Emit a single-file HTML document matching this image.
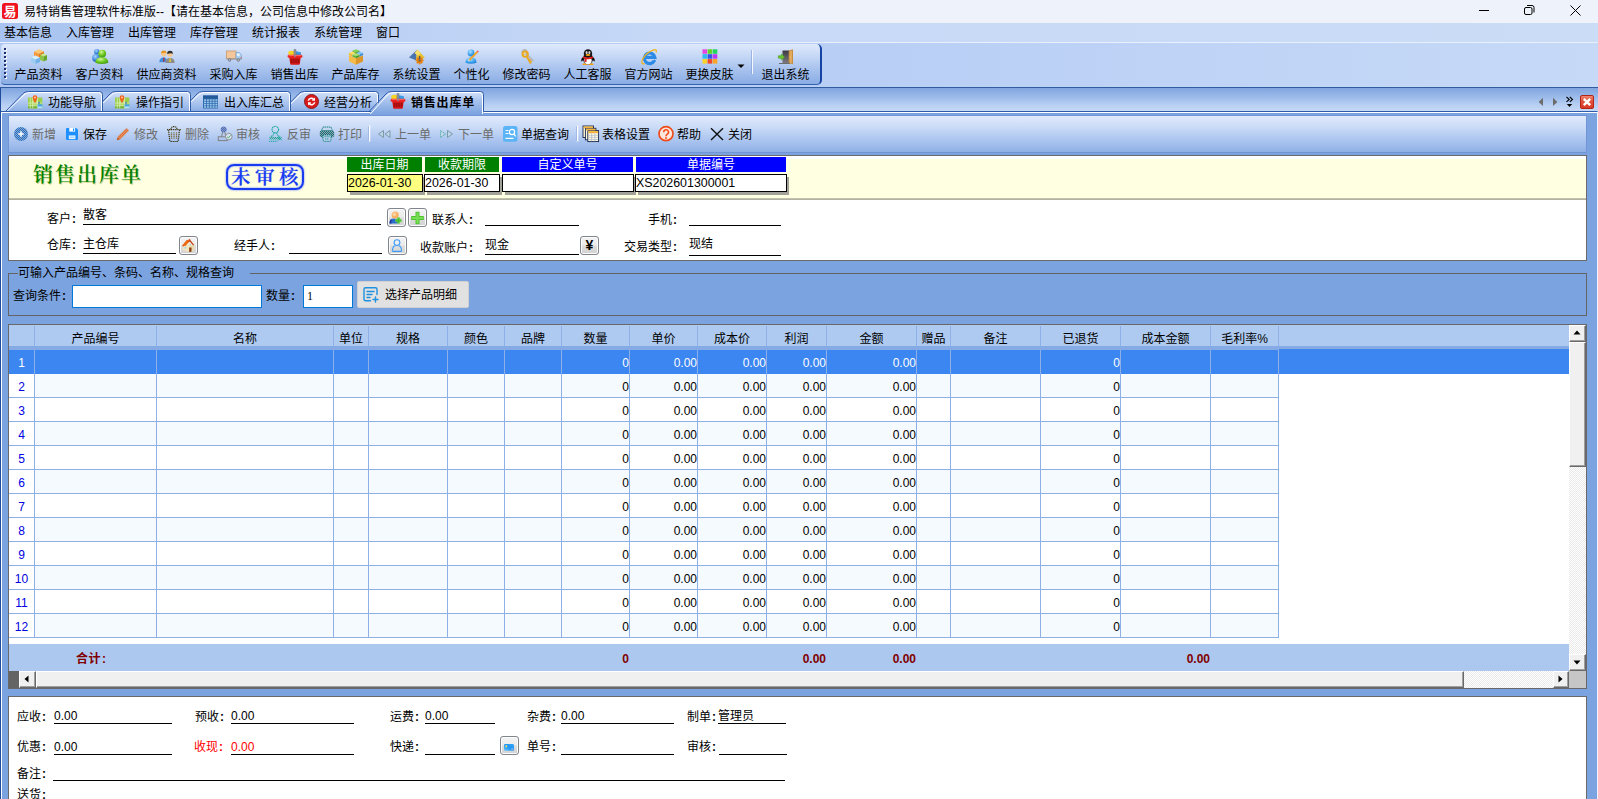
<!DOCTYPE html>
<html lang="zh-CN"><head><meta charset="utf-8"><title>易特销售管理软件标准版</title>
<style>
html,body{margin:0;padding:0}
body{width:1598px;height:799px;overflow:hidden;position:relative;background:#7ba3df;color:#000;
 font-family:"Liberation Sans","Noto Sans CJK SC",sans-serif;font-size:12px;line-height:14px}
div,span,svg{position:absolute;box-sizing:border-box}
svg{overflow:visible}
.t{white-space:nowrap;height:14px;line-height:14px}
.g{color:#6d6d6d}
.ul{height:1px;background:#000}
b{font-weight:bold;margin-left:1px;margin-right:1px}
.btn{background:#e6e6e6;border:1px solid #adadad;border-radius:2px}
</style></head>
<body>
<div style="left:0px;top:0px;width:1598px;height:23px;background:#eef2fa"></div>
<svg style="left:2px;top:3px" width="16" height="16" viewBox="0 0 16 16"><rect x="0" y="0" width="16" height="16" rx="2.5" fill="#f0141e"/><text x="8" y="13" font-size="13" font-weight="bold" text-anchor="middle" fill="#fff" font-family='"Liberation Sans","Noto Sans CJK SC",sans-serif'>易</text></svg>
<span class="t" style="left:24px;top:5px;">易特销售管理软件标准版--【请在基本信息，公司信息中修改公司名】</span>
<svg style="left:1470px;top:0" width="128" height="23" viewBox="0 0 128 23"><g stroke="#000" stroke-width="1" fill="none"><path d="M9 10.500h10"/><rect x="54.500" y="7.500" width="7.500" height="7" rx="1.500"/><path d="M57 5.500h5a2 2 0 0 1 2 2v5"/><path d="M100.500 5.500l10 10M110.500 5.500l-10 10"/></g></svg>
<div style="left:0px;top:23px;width:1598px;height:19px;background:linear-gradient(90deg,#a8c3f1 0,#b9cff4 300px,#c7d9f6 700px,#cbdcf7 100%)"></div>
<span class="t" style="left:4px;top:26px;">基本信息</span>
<span class="t" style="left:66px;top:26px;">入库管理</span>
<span class="t" style="left:128px;top:26px;">出库管理</span>
<span class="t" style="left:190px;top:26px;">库存管理</span>
<span class="t" style="left:252px;top:26px;">统计报表</span>
<span class="t" style="left:314px;top:26px;">系统管理</span>
<span class="t" style="left:376px;top:26px;">窗口</span>
<div style="left:0px;top:42px;width:1598px;height:1px;background:#e9f0fc"></div>
<div style="left:0px;top:43px;width:1598px;height:44px;background:linear-gradient(90deg,#adc6f2 0,#b5ccf4 400px,#b9cff5 900px,#c6d9f7 100%)"></div>
<div style="left:1px;top:44px;width:821px;height:41px;background:linear-gradient(180deg,#dfe9fb 0,#c6d8f6 30%,#a9c3ee 62%,#8aace4 100%);border-radius:4px 5px 5px 4px;border-right:2px solid #1443a4;border-bottom:1px solid #3562ae"></div>
<div style="left:5px;top:49px;width:2px;height:2px;background:#fff"></div>
<div style="left:4px;top:48px;width:2px;height:2px;background:#1c2f6e"></div>
<div style="left:5px;top:53px;width:2px;height:2px;background:#fff"></div>
<div style="left:4px;top:52px;width:2px;height:2px;background:#1c2f6e"></div>
<div style="left:5px;top:57px;width:2px;height:2px;background:#fff"></div>
<div style="left:4px;top:56px;width:2px;height:2px;background:#1c2f6e"></div>
<div style="left:5px;top:61px;width:2px;height:2px;background:#fff"></div>
<div style="left:4px;top:60px;width:2px;height:2px;background:#1c2f6e"></div>
<div style="left:5px;top:65px;width:2px;height:2px;background:#fff"></div>
<div style="left:4px;top:64px;width:2px;height:2px;background:#1c2f6e"></div>
<div style="left:5px;top:69px;width:2px;height:2px;background:#fff"></div>
<div style="left:4px;top:68px;width:2px;height:2px;background:#1c2f6e"></div>
<div style="left:5px;top:73px;width:2px;height:2px;background:#fff"></div>
<div style="left:4px;top:72px;width:2px;height:2px;background:#1c2f6e"></div>
<div style="left:5px;top:77px;width:2px;height:2px;background:#fff"></div>
<div style="left:4px;top:76px;width:2px;height:2px;background:#1c2f6e"></div>
<svg style="left:31px;top:49px" width="16" height="16" viewBox="0 0 16 16"><path d="M3 2.500l5-2.200 5 2.200-5 2.200z" fill="#ffc870"/><path d="M3 2.500l5 2.200v4.300l-5-2z" fill="#f4993c"/><path d="M13 2.500l-5 2.200v4.300l5-2z" fill="#e07c1c"/><path d="M0 8.500l4.500-2 4.500 2-4.500 2z" fill="#d6edfc"/><path d="M0 8.500l4.500 2v4.500l-4.500-2z" fill="#9ccdf2"/><path d="M9 8.500l-4.500 2v4.500l4.500-2z" fill="#72b2e8"/><path d="M9 6l3.500-1.500 3.500 1.500-3.500 1.500z" fill="#c6e88c"/><path d="M9 6l3.500 1.500v5l-3.500-1.500z" fill="#8cc646"/><path d="M16 6l-3.500 1.500v5l3.500-1.500z" fill="#68a628"/></svg>
<span class="t" style="left:8px;top:68px;width:61px;text-align:center">产品资料</span>
<svg style="left:92px;top:49px" width="16" height="16" viewBox="0 0 16 16"><defs><radialGradient id="cg" cx="0.4" cy="0.3" r="0.8"><stop offset="0" stop-color="#d4f79a"/><stop offset="0.5" stop-color="#6cc820"/><stop offset="1" stop-color="#3a900c"/></radialGradient><radialGradient id="cb" cx="0.4" cy="0.3" r="0.8"><stop offset="0" stop-color="#a8d4ff"/><stop offset="0.6" stop-color="#3a84dc"/><stop offset="1" stop-color="#1c50a8"/></radialGradient></defs><circle cx="4.800" cy="2.800" r="2.700" fill="url(#cb)"/><ellipse cx="4" cy="9" rx="3.800" ry="3.900" fill="url(#cb)"/><path d="M3.300 13.800Q3 8.200 9.800 8.200Q16.500 8.200 16.300 13.800Q9.800 16.400 3.300 13.800z" fill="url(#cg)"/><circle cx="10.200" cy="4.600" r="3.900" fill="url(#cg)"/></svg>
<span class="t" style="left:69px;top:68px;width:61px;text-align:center">客户资料</span>
<svg style="left:159px;top:49px" width="16" height="16" viewBox="0 0 16 16"><path d="M0.300 13.200Q0.300 8.400 4.800 8.400Q8.200 8.400 8.200 13.200z" fill="#3d8fe4"/><circle cx="4.800" cy="4.800" r="2.600" fill="#f9c88e"/><path d="M2.100 4.600Q2 1.500 4.800 1.500Q7.600 1.500 7.500 4.400Q6 2.900 2.100 4.600z" fill="#e8921e"/><path d="M4.400 8.500h.9l.3 3.500-.75.900-.75-.9z" fill="#c02828"/><path d="M6.300 14Q6.300 9 11 9Q15.700 9 15.700 14z" fill="#8c8c8c"/><circle cx="11" cy="5.200" r="2.700" fill="#f4c896"/><path d="M8.200 5Q8 1.800 11 1.800Q14 1.800 13.800 5Q12.500 3.300 8.200 5z" fill="#2c2c2c"/><path d="M10.600 9.100h.9l.3 3.200-.75.900-.75-.9z" fill="#f0d020"/></svg>
<span class="t" style="left:130px;top:68px;width:73px;text-align:center">供应商资料</span>
<svg style="left:226px;top:49px" width="16" height="16" viewBox="0 0 16 16"><rect x="0.500" y="2" width="9.500" height="7.500" fill="#f3c79a" stroke="#c79a6c" stroke-width="0.800"/><path d="M10 3.500h3.300l2.200 2.800v3.700h-5.500z" fill="#a9d0f2" stroke="#7aa4d0" stroke-width="0.700"/><rect x="11" y="4.500" width="2.600" height="2.300" fill="#eef7ff"/><rect x="0.500" y="9.500" width="15" height="1.200" fill="#9a9aa4"/><circle cx="3.600" cy="11" r="1.700" fill="#7c828a"/><circle cx="12.300" cy="11" r="1.700" fill="#7c828a"/><circle cx="3.600" cy="11" r="0.700" fill="#c8ccd0"/><circle cx="12.300" cy="11" r="0.700" fill="#c8ccd0"/><rect x="14.700" y="8" width="0.900" height="1.200" fill="#e84a30"/></svg>
<span class="t" style="left:203px;top:68px;width:61px;text-align:center">采购入库</span>
<svg style="left:287px;top:49px" width="16" height="16" viewBox="0 0 16 16"><ellipse cx="4.500" cy="4" rx="3.300" ry="2.300" fill="#f6d426"/><path d="M9 2.300l4.800 1 .2 2.700h-5z" fill="#3a9ae4"/><rect x="7" y="0.300" width="1.900" height="8.500" rx="0.900" fill="#9a9aa2" stroke="#5e5e68" stroke-width="0.500"/><path d="M2.200 8h11.600l-1 7a.9.900 0 0 1-.9.800h-7.800a.9.900 0 0 1-.9-.8z" fill="#d41616"/><rect x="0.600" y="5.700" width="14.800" height="3" rx="1.300" fill="#ee2424"/><rect x="1.500" y="6.200" width="13" height="0.900" rx="0.450" fill="#ff7a6a"/><path d="M4.300 10v4M6.200 10v4M8 10v4M9.800 10v4M11.700 10v4" stroke="#8a0c0c" stroke-width="0.900"/><rect x="7.300" y="4.500" width="1.300" height="3.800" fill="#8a8a94"/></svg>
<span class="t" style="left:264px;top:68px;width:61px;text-align:center">销售出库</span>
<svg style="left:348px;top:49px" width="16" height="16" viewBox="0 0 16 16"><path d="M1 6.300l7 3v6.500l-7-3.200z" fill="#f4bb48"/><path d="M15 6.300l-7 3v6.500l7-3.200z" fill="#dc962a"/><path d="M8 0.300l3.500 1.500-3.500 1.500-3.500-1.500z" fill="#86d44c"/><path d="M4.500 1.800l3.500 1.500v1.700l-3.500-1.500z" fill="#5aa82c"/><path d="M11.500 1.800l-3.500 1.500v1.700l3.500-1.500z" fill="#4a9420"/><path d="M4.400 2.600l3.500 1.500-3.500 1.500-3.500-1.500z" fill="#fbe060"/><path d="M0.900 4.100l3.500 1.500v1.800l-3.500-1.500z" fill="#f0b830"/><path d="M11.600 2.600l3.500 1.500-3.500 1.500-3.500-1.500z" fill="#7cc4f4"/><path d="M15.100 4.100l-3.500 1.500v1.800l3.500-1.500z" fill="#3c8cd8"/><path d="M8 4.300l3.500 1.500-3.500 1.500-3.500-1.500z" fill="#a4e070"/><path d="M4.500 5.800l3.500 1.500v2l-3.500-1.500z" fill="#66b634"/><path d="M11.500 5.800l-3.500 1.500v2l3.500-1.500z" fill="#4c9a24"/></svg>
<span class="t" style="left:325px;top:68px;width:61px;text-align:center">产品库存</span>
<svg style="left:409px;top:49px" width="16" height="16" viewBox="0 0 16 16"><path d="M8.300 0.600l-8.300 8 7 2.600z" fill="#4a72ac"/><path d="M8.300 0.600l-1.300 10.600 9-2.500z" fill="#e6c02e"/><path d="M8.300 0.600l3.500 3.800-3.300 2-3-2.300z" fill="#f8de6c"/><g fill="#e8820e"><circle cx="10.600" cy="11.400" r="3"/><rect x="9.800" y="7.400" width="1.600" height="8" /><rect x="6.600" y="10.600" width="8" height="1.600"/><rect x="9.800" y="7.400" width="1.600" height="8" transform="rotate(45 10.600 11.400)"/><rect x="6.600" y="10.600" width="8" height="1.600" transform="rotate(45 10.600 11.400)"/></g><circle cx="10.600" cy="11.400" r="1.200" fill="#7a6a58"/><rect x="9.900" y="7" width="1.400" height="3.200" fill="#5a5a66"/></svg>
<span class="t" style="left:386px;top:68px;width:61px;text-align:center">系统设置</span>
<svg style="left:464px;top:49px" width="16" height="16" viewBox="0 0 16 16"><defs><radialGradient id="pg" cx="0.4" cy="0.3" r="0.8"><stop offset="0" stop-color="#b4e2ff"/><stop offset="0.6" stop-color="#38a0f0"/><stop offset="1" stop-color="#1c78d0"/></radialGradient></defs><path d="M1.500 13.800Q1.400 8.400 7 8.400Q12.600 8.400 12.500 13.800Q7 15.800 1.500 13.800z" fill="url(#pg)"/><circle cx="7" cy="4" r="3.400" fill="url(#pg)"/><path d="M13.300 2.800l-8 8.300" stroke="#f2a422" stroke-width="1.900"/><path d="M4.300 12.200l.5-1.700 1.200 1.200z" fill="#f6e0a0"/><path d="M12.700 2.200l1.300 1.300 .8-.9-1.300-1.200z" fill="#e84a4a"/></svg>
<span class="t" style="left:447px;top:68px;width:49px;text-align:center">个性化</span>
<svg style="left:519px;top:49px" width="16" height="16" viewBox="0 0 16 16"><g fill="none" stroke="#b4b4b8" stroke-width="1.400"><circle cx="5.500" cy="3" r="2.300"/><path d="M7.300 4.700l7.200 7.300M12.600 10.200l-1.200 1.200"/></g><g fill="none" stroke="#eaa820" stroke-width="2"><circle cx="6.200" cy="5.200" r="2.600"/><path d="M7.800 7.600l4 7"/></g><path d="M10 11.500l1.800-1M11 13.300l1.800-1" stroke="#eaa820" stroke-width="1.300"/><circle cx="5.600" cy="4.500" r="0.900" fill="#fbe08a"/></svg>
<span class="t" style="left:496px;top:68px;width:61px;text-align:center">修改密码</span>
<svg style="left:580px;top:49px" width="16" height="16" viewBox="0 0 16 16"><ellipse cx="5" cy="15.200" rx="2.700" ry="0.900" fill="#f4a010"/><ellipse cx="11" cy="15.200" rx="2.700" ry="0.900" fill="#f4a010"/><path d="M1.500 12.500Q0.300 10 3.500 7.500L5 10zM14.500 12.500Q15.700 10 12.500 7.500L11 10z" fill="#141414"/><ellipse cx="8" cy="10" rx="5" ry="5.300" fill="#141414"/><ellipse cx="8" cy="11.400" rx="3.700" ry="3.600" fill="#fff"/><ellipse cx="8" cy="4.600" rx="4.200" ry="4.300" fill="#141414"/><ellipse cx="6.600" cy="3.700" rx="1" ry="1.400" fill="#fff"/><ellipse cx="9.400" cy="3.700" rx="1" ry="1.400" fill="#fff"/><circle cx="6.900" cy="3.900" r="0.450" fill="#000"/><circle cx="9.100" cy="3.900" r="0.450" fill="#000"/><ellipse cx="8" cy="6" rx="2.300" ry="0.950" fill="#f6a414"/><path d="M3.300 7.200Q8 9.600 12.700 7.200L13.100 8.900Q8 11.400 2.900 8.900z" fill="#e01c1c"/><path d="M5 9.500l1.700.5-.3 3.300-1.800-.4z" fill="#e01c1c"/></svg>
<span class="t" style="left:557px;top:68px;width:61px;text-align:center">人工客服</span>
<svg style="left:641px;top:49px" width="16" height="16" viewBox="0 0 16 16"><g fill="none" stroke="#2a8ae6" stroke-width="3.200"><path d="M13.300 11.800A5.300 5.300 0 1 1 13.800 8.300H5"/></g><path d="M12.800 11.300l1.700 .9" stroke="#2a8ae6" stroke-width="2"/><path d="M15 3.400Q16.600 -0.200 12.200 1.100Q5.500 3.300 1.800 9.800Q-0.800 15.600 3.700 14.700" fill="none" stroke="#f0b41e" stroke-width="1.300"/></svg>
<span class="t" style="left:618px;top:68px;width:61px;text-align:center">官方网站</span>
<svg style="left:702px;top:49px" width="16" height="16" viewBox="0 0 16 16"><rect x="0.5" y="0.3" width="4.600" height="4.500" fill="#e447e0"/><rect x="5.6" y="0.3" width="4.600" height="4.500" fill="#62d326"/><rect x="10.7" y="0.3" width="4.600" height="4.500" fill="#22d462"/><rect x="0.5" y="5.2" width="4.600" height="4.500" fill="#31b9f2"/><rect x="5.6" y="5.2" width="4.600" height="4.500" fill="#3456e2"/><rect x="10.7" y="5.2" width="4.600" height="4.500" fill="#c236f2"/><rect x="0.5" y="10.100000000000001" width="4.600" height="4.500" fill="#fbd327"/><rect x="5.6" y="10.100000000000001" width="4.600" height="4.500" fill="#f2462a"/><rect x="10.7" y="10.100000000000001" width="4.600" height="4.500" fill="#fba426"/></svg>
<span class="t" style="left:679px;top:68px;width:61px;text-align:center">更换皮肤</span>
<svg style="left:778px;top:49px" width="16" height="16" viewBox="0 0 16 16"><path d="M1 14.500h11" stroke="#6a6a6a" stroke-width="1"/><defs><linearGradient id="dg" x1="0" y1="0" x2="0" y2="1"><stop offset="0" stop-color="#3a3a40"/><stop offset="1" stop-color="#7a7a80"/></linearGradient></defs><rect x="4.500" y="1.500" width="7" height="12.700" fill="url(#dg)"/><path d="M10.700 1.700l4.300-1.500v15l-4.300-1.200z" fill="#c98a3a"/><path d="M11.600 2.500l2.500-.9v12.300l-2.500-.7z" fill="#deaa62"/><circle cx="12.200" cy="8" r="0.600" fill="#f4e060"/><path d="M0.300 6.800h3v-1.800l3.300 3-3.300 3v-1.800h-3z" fill="#6cc62a" stroke="#3e961a" stroke-width="0.500"/></svg>
<span class="t" style="left:755px;top:68px;width:61px;text-align:center">退出系统</span>
<svg style="left:737px;top:64px" width="8" height="5" viewBox="0 0 8 5"><path d="M0.5 0.5h7l-3.5 3.5z" fill="#000"/></svg>
<div style="left:752px;top:50px;width:1px;height:24px;background:#f4f8fe"></div>
<div style="left:751px;top:50px;width:1px;height:24px;background:#7b9bd6;opacity:.6"></div>
<div style="left:0px;top:87px;width:1598px;height:1px;background:#315c9f"></div>
<div style="left:0px;top:88px;width:1598px;height:23px;background:linear-gradient(180deg,#81a5e0 0,#98b8e9 35%,#b9d0f3 75%,#c6d9f6 100%)"></div>
<div style="left:0px;top:111px;width:1597px;height:1px;background:#2f5bab"></div>
<div style="left:1px;top:112px;width:1597px;height:1px;background:#fff"></div>
<svg style="left:0;top:88px" width="520" height="26" viewBox="0 0 520 26"><defs><linearGradient id="tg" x1="0" y1="0" x2="0" y2="1"><stop offset="0" stop-color="#d3e1f8"/><stop offset="0.45" stop-color="#b4cbf1"/><stop offset="1" stop-color="#8aade5"/></linearGradient><linearGradient id="ta" x1="0" y1="0" x2="0" y2="1"><stop offset="0" stop-color="#d6e4f9"/><stop offset="0.4" stop-color="#a9c3ee"/><stop offset="1" stop-color="#7ba3df"/></linearGradient></defs><path d="M281.5 23.5L298.5 6.0Q300.5 3.5 304.5 3.5H375.5Q378.5 3.5 378.5 6.5V23.5Z" fill="url(#tg)"/><path d="M282.9 23.5L299.9 7.0Q301.9 4.5 305.9 4.5H374.5Q377.5 4.5 377.5 7.5V23.5" fill="none" stroke="#fff" stroke-width="1"/><path d="M281.5 23.5L298.5 6.0Q300.5 3.5 304.5 3.5H375.5Q378.5 3.5 378.5 6.5V23.5" fill="none" stroke="#2f5bab" stroke-width="1"/><path d="M180 23.5L197 6.0Q199 3.5 203 3.5H287.5Q290.5 3.5 290.5 6.5V23.5Z" fill="url(#tg)"/><path d="M181.4 23.5L198.4 7.0Q200.4 4.5 204.4 4.5H286.5Q289.5 4.5 289.5 7.5V23.5" fill="none" stroke="#fff" stroke-width="1"/><path d="M180 23.5L197 6.0Q199 3.5 203 3.5H287.5Q290.5 3.5 290.5 6.5V23.5" fill="none" stroke="#2f5bab" stroke-width="1"/><path d="M93 23.5L110 6.0Q112 3.5 116 3.5H187.5Q190.5 3.5 190.5 6.5V23.5Z" fill="url(#tg)"/><path d="M94.4 23.5L111.4 7.0Q113.4 4.5 117.4 4.5H186.5Q189.5 4.5 189.5 7.5V23.5" fill="none" stroke="#fff" stroke-width="1"/><path d="M93 23.5L110 6.0Q112 3.5 116 3.5H187.5Q190.5 3.5 190.5 6.5V23.5" fill="none" stroke="#2f5bab" stroke-width="1"/><path d="M5.5 23.5L22.5 6.0Q24.5 3.5 28.5 3.5H99.5Q102.5 3.5 102.5 6.5V23.5Z" fill="url(#tg)"/><path d="M6.9 23.5L23.9 7.0Q25.9 4.5 29.9 4.5H98.5Q101.5 4.5 101.5 7.5V23.5" fill="none" stroke="#fff" stroke-width="1"/><path d="M5.5 23.5L22.5 6.0Q24.5 3.5 28.5 3.5H99.5Q102.5 3.5 102.5 6.5V23.5" fill="none" stroke="#2f5bab" stroke-width="1"/><path d="M0 23.5H520" stroke="#2f5bab"/><path d="M1 24.5H520" stroke="#fff"/><path d="M369 26L386 6.0Q388 3.5 392 3.5H480.5Q483.5 3.5 483.5 6.5V26Z" fill="url(#ta)"/><path d="M370.4 26L387.4 7.0Q389.4 4.5 393.4 4.5H479.5Q482.5 4.5 482.5 7.5V26" fill="none" stroke="#fff" stroke-width="1"/><path d="M369 23.5L386 6.0Q388 3.5 392 3.5H480.5Q483.5 3.5 483.5 6.5V23.5" fill="none" stroke="#2f5bab" stroke-width="1"/></svg>
<svg style="left:28px;top:95px" width="14" height="14" viewBox="0 0 14 14"><rect x="0" y="2.500" width="14.300" height="10.800" fill="#9ad04a"/><rect x="4.700" y="2.500" width="4.800" height="10.800" fill="#b6de6c"/><rect x="0" y="10.800" width="9.500" height="2.500" fill="#74b430"/><path d="M0 8h14.300M0 10.800h14.300M4.700 2.500v10.800M9.500 2.500v10.800M2.300 2.500v10.800" stroke="#e4f2c4" stroke-width="0.700" fill="none"/><rect x="9.500" y="9.300" width="4.800" height="4" fill="#46a8e8"/><rect x="9.500" y="11.500" width="4.800" height="1.800" fill="#bfe2f8"/><path d="M9.800 8.500l1.200-1.900 1.200 1.900z" fill="#2a6ac8"/><path d="M7 8.300Q4.700 4.300 4.700 2.500A2.300 2.300 0 0 1 9.300 2.500Q9.300 4.300 7 8.300z" fill="#f2601a"/><circle cx="7" cy="2.500" r="0.900" fill="#ffd8b8"/></svg>
<svg style="left:115px;top:95px" width="14" height="14" viewBox="0 0 14 14"><rect x="0" y="2.500" width="14.300" height="10.800" fill="#9ad04a"/><rect x="4.700" y="2.500" width="4.800" height="10.800" fill="#b6de6c"/><rect x="0" y="10.800" width="9.500" height="2.500" fill="#74b430"/><path d="M0 8h14.300M0 10.800h14.300M4.700 2.500v10.800M9.500 2.500v10.800M2.300 2.500v10.800" stroke="#e4f2c4" stroke-width="0.700" fill="none"/><rect x="9.500" y="9.300" width="4.800" height="4" fill="#46a8e8"/><rect x="9.500" y="11.500" width="4.800" height="1.800" fill="#bfe2f8"/><path d="M9.800 8.500l1.200-1.900 1.200 1.900z" fill="#2a6ac8"/><path d="M7 8.300Q4.700 4.300 4.700 2.500A2.300 2.300 0 0 1 9.300 2.500Q9.300 4.300 7 8.300z" fill="#f2601a"/><circle cx="7" cy="2.500" r="0.900" fill="#ffd8b8"/></svg>
<svg style="left:203px;top:95px" width="15" height="14" viewBox="0 0 15 14"><rect x="0" y="0.500" width="15" height="13" fill="#2d6cae"/><rect x="0" y="0.500" width="15" height="3" fill="#235a98"/><rect x="1.0" y="4.3" width="2" height="1.600" fill="#9cc4ea"/><rect x="3.85" y="4.3" width="2" height="1.600" fill="#9cc4ea"/><rect x="6.7" y="4.3" width="2" height="1.600" fill="#9cc4ea"/><rect x="9.55" y="4.3" width="2" height="1.600" fill="#9cc4ea"/><rect x="12.4" y="4.3" width="2" height="1.600" fill="#9cc4ea"/><rect x="1.0" y="6.6" width="2" height="1.600" fill="#9cc4ea"/><rect x="3.85" y="6.6" width="2" height="1.600" fill="#9cc4ea"/><rect x="6.7" y="6.6" width="2" height="1.600" fill="#9cc4ea"/><rect x="9.55" y="6.6" width="2" height="1.600" fill="#9cc4ea"/><rect x="12.4" y="6.6" width="2" height="1.600" fill="#9cc4ea"/><rect x="1.0" y="8.899999999999999" width="2" height="1.600" fill="#9cc4ea"/><rect x="3.85" y="8.899999999999999" width="2" height="1.600" fill="#9cc4ea"/><rect x="6.7" y="8.899999999999999" width="2" height="1.600" fill="#9cc4ea"/><rect x="9.55" y="8.899999999999999" width="2" height="1.600" fill="#9cc4ea"/><rect x="12.4" y="8.899999999999999" width="2" height="1.600" fill="#9cc4ea"/><rect x="1.0" y="11.2" width="2" height="1.600" fill="#9cc4ea"/><rect x="3.85" y="11.2" width="2" height="1.600" fill="#9cc4ea"/><rect x="6.7" y="11.2" width="2" height="1.600" fill="#9cc4ea"/><rect x="9.55" y="11.2" width="2" height="1.600" fill="#9cc4ea"/><rect x="12.4" y="11.2" width="2" height="1.600" fill="#9cc4ea"/></svg>
<svg style="left:304px;top:94px" width="15" height="15" viewBox="0 0 15 15"><circle cx="7.500" cy="7.500" r="7" fill="#d81c1c" stroke="#8a1010" stroke-width="0.900"/><path d="M3.600 6.800A4 4 0 0 1 10 4.500l1-1v3.300h-3.300l1.100-1.100A2.600 2.600 0 0 0 5 6.800z" fill="#fff"/><path d="M11.400 8.200A4 4 0 0 1 5 10.500l-1 1v-3.300h3.300l-1.100 1.100A2.600 2.600 0 0 0 10 8.200z" fill="#fff"/></svg>
<svg style="left:390px;top:93px" width="16" height="16" viewBox="0 0 16 16"><ellipse cx="4.500" cy="4" rx="3.300" ry="2.300" fill="#f6d426"/><path d="M9 2.300l4.800 1 .2 2.700h-5z" fill="#3a9ae4"/><rect x="7" y="0.300" width="1.900" height="8.500" rx="0.900" fill="#9a9aa2" stroke="#5e5e68" stroke-width="0.500"/><path d="M2.200 8h11.600l-1 7a.9.900 0 0 1-.9.800h-7.800a.9.900 0 0 1-.9-.8z" fill="#d41616"/><rect x="0.600" y="5.700" width="14.800" height="3" rx="1.300" fill="#ee2424"/><rect x="1.500" y="6.200" width="13" height="0.900" rx="0.450" fill="#ff7a6a"/><path d="M4.300 10v4M6.200 10v4M8 10v4M9.800 10v4M11.700 10v4" stroke="#8a0c0c" stroke-width="0.900"/><rect x="7.300" y="4.500" width="1.300" height="3.800" fill="#8a8a94"/></svg>
<span class="t" style="left:48px;top:96px;">功能导航</span>
<span class="t" style="left:136px;top:96px;">操作指引</span>
<span class="t" style="left:224px;top:96px;">出入库汇总</span>
<span class="t" style="left:324px;top:96px;">经营分析</span>
<span class="t" style="left:411px;top:96px;font-weight:bold;letter-spacing:0.8px">销售出库单</span>
<svg style="left:1536px;top:93px" width="60" height="18" viewBox="0 0 60 18"><defs><linearGradient id="xg" x1="0" y1="0" x2="0" y2="1"><stop offset="0" stop-color="#f08a78"/><stop offset="0.45" stop-color="#e2503c"/><stop offset="1" stop-color="#d83a26"/></linearGradient></defs><path d="M7 4.800v8.200l-4.300-4.100z" fill="#6c6c6c"/><path d="M17 4.800v8.200l4.300-4.100z" fill="#6c6c6c"/><path d="M30.500 4l2.700 2.400-2.700 2.400M33.800 4l2.700 2.400-2.700 2.400" fill="none" stroke="#000" stroke-width="1.100"/><path d="M30.800 11h5.400l-2.700 3z" fill="#000"/><rect x="44.500" y="2.500" width="13" height="13" rx="1.500" fill="url(#xg)" stroke="#b42414" stroke-width="1"/><path d="M47.800 5.800l6.400 6.400M54.200 5.800l-6.400 6.400" stroke="#fff" stroke-width="2.400" fill="none"/></svg>
<div style="left:0px;top:88px;width:1px;height:712px;background:#1f4c9c"></div>
<div style="left:1px;top:112px;width:1px;height:688px;background:#fff"></div>
<div style="left:1597px;top:112px;width:1px;height:688px;background:#eef3fc"></div>
<div style="left:8px;top:115px;width:1579px;height:38px;background:linear-gradient(180deg,#e0eafc 0,#cbdcf7 30%,#adc6f0 65%,#8fb0e6 100%);border:1px solid #7094d4"></div>
<svg style="left:13px;top:126px" width="16" height="16" viewBox="0 0 16 16"><defs><pattern id="da" width="2" height="2" patternUnits="userSpaceOnUse"><rect width="2" height="2" fill="#8aa6cc"/><rect width="1" height="1" fill="#1f70c6"/><rect x="1" y="1" width="1" height="1" fill="#1f70c6"/></pattern></defs><circle cx="8" cy="8" r="7" fill="url(#da)"/><path d="M8 5.200v5.600M5.200 8h5.600" stroke="#fff" stroke-width="1.600"/></svg>
<span class="t" style="left:32px;top:128px;color:#6b6b6b">新增</span>
<svg style="left:64px;top:126px" width="16" height="16" viewBox="0 0 16 16"><path d="M2 3a1 1 0 0 1 1-1h9.300l1.700 1.700v9.300a1 1 0 0 1-1 1h-10a1 1 0 0 1-1-1z" fill="#1e90ff"/><rect x="5.300" y="2" width="5.800" height="3.600" fill="#fff"/><rect x="9" y="2.500" width="1.200" height="2.400" fill="#1e90ff"/><rect x="4.800" y="9.400" width="6.600" height="3.700" fill="#dff0ff"/><rect x="5.800" y="10.800" width="4.600" height="1" fill="#9fd0ff"/></svg>
<span class="t" style="left:83px;top:128px;">保存</span>
<svg style="left:115px;top:126px" width="16" height="16" viewBox="0 0 16 16"><defs><pattern id="de" width="2" height="2" patternUnits="userSpaceOnUse"><rect width="2" height="2" fill="#d09878"/><rect width="1" height="1" fill="#ee6a28"/><rect x="1" y="1" width="1" height="1" fill="#ee6a28"/></pattern></defs><path d="M1.800 14.200l1-3.600 8.700-8.700 2.600 2.600-8.700 8.700z" fill="url(#de)"/><path d="M1.800 14.200l.8-2.800 2 2z" fill="#b06030"/></svg>
<span class="t" style="left:134px;top:128px;color:#6b6b6b">修改</span>
<svg style="left:166px;top:126px" width="16" height="16" viewBox="0 0 16 16"><g fill="none" stroke="#3a3008" stroke-width="1.200" stroke-dasharray="1.200 0.700"><path d="M1 3.700h14M5 3.500Q5 0.600 8 0.600Q11 0.600 11 3.500"/><path d="M2.500 4.200l1.200 9.800q0.150 1.500 1.800 1.500h5q1.650 0 1.800-1.500l1.200-9.800"/></g><path d="M5.500 6.200v6.800M8 6.200v6.800M10.500 6.200v6.800" stroke="#7e7048" stroke-width="1.300" stroke-dasharray="1.200 0.600" fill="none"/></svg>
<span class="t" style="left:185px;top:128px;color:#6b6b6b">删除</span>
<svg style="left:217px;top:126px" width="16" height="16" viewBox="0 0 16 16"><defs><pattern id="du" width="2" height="2" patternUnits="userSpaceOnUse"><rect width="2" height="2" fill="#8c9cc0"/><rect width="1" height="1" fill="#4a6cc0"/><rect x="1" y="1" width="1" height="1" fill="#4a6cc0"/></pattern></defs><circle cx="6.700" cy="3.400" r="3" fill="url(#du)"/><path d="M5.600 6.200l-1 4.500M7.800 6.200l1 4.500" fill="none" stroke="#808080" stroke-width="1"/><rect x="1.300" y="10.800" width="9" height="3.800" fill="none" stroke="#808080" stroke-width="1"/><circle cx="11.800" cy="10.600" r="3.300" fill="#d6e3f6" stroke="#8a8a8a" stroke-width="0.900"/><path d="M10.100 10.800l1.300 1.200 2.100-2.600" fill="none" stroke="#4aa44a" stroke-width="0.900"/></svg>
<span class="t" style="left:236px;top:128px;color:#6b6b6b">审核</span>
<svg style="left:268px;top:126px" width="16" height="16" viewBox="0 0 16 16"><defs><pattern id="dn" width="2" height="2" patternUnits="userSpaceOnUse"><rect width="2" height="2" fill="#a8b4c8"/><rect width="1" height="1" fill="#16b0a0"/><rect x="1" y="1" width="1" height="1" fill="#16b0a0"/></pattern></defs><g fill="none" stroke="#18a898" stroke-width="1.100" stroke-dasharray="1.300 0.600"><circle cx="7.300" cy="3.600" r="3.300"/><path d="M5.800 6.600q0.700 2.400-3.500 4.400M8.800 6.600q-0.700 2.400 3.500 4.400"/></g><path d="M1.300 11h11v2.500h-11z" fill="url(#dn)"/><path d="M1 15.300h8.500" stroke="#18a898" stroke-width="1.100" stroke-dasharray="1.300 0.600"/><path d="M10.500 11l3.300 3.300M13.800 11l-3.300 3.300" stroke="#18a898" stroke-width="1"/></svg>
<span class="t" style="left:287px;top:128px;color:#6b6b6b">反审</span>
<svg style="left:319px;top:126px" width="16" height="16" viewBox="0 0 16 16"><defs><pattern id="dp" width="2" height="2" patternUnits="userSpaceOnUse"><rect width="2" height="2" fill="#9a9cae"/><rect width="1" height="1" fill="#0a7876"/><rect x="1" y="1" width="1" height="1" fill="#0a7876"/></pattern></defs><path d="M4 1h8l1.500 3.500h-11z" fill="#c4d6f2" stroke="#158280" stroke-width="1" stroke-dasharray="1.300 0.600"/><path d="M0.800 6Q0.800 4.500 2.300 4.500h11.400Q15.200 4.500 15.200 6v4.300l-2.200 1.200h-10l-2.200-1.200z" fill="url(#dp)"/><path d="M4 9h8v5.500l-1 .8h-6l-1-.8z" fill="#bed2f0" stroke="#158280" stroke-width="1" stroke-dasharray="1.300 0.600"/><path d="M5.500 10.800h5M6 13h4" stroke="#158280" stroke-width="0.900" stroke-dasharray="1.300 0.600"/></svg>
<span class="t" style="left:338px;top:128px;color:#6b6b6b">打印</span>
<svg style="left:377px;top:126px" width="16" height="16" viewBox="0 0 16 16"><g fill="#c0d4ec" stroke="#7a9aa6" stroke-width="1"><path d="M1.500 8l5-3.500v7z"/><path d="M8 8l5-3.500v7z"/></g></svg>
<span class="t" style="left:395px;top:128px;color:#6b6b6b">上一单</span>
<svg style="left:440px;top:126px" width="16" height="16" viewBox="0 0 16 16"><g fill="#c0d4ec" stroke="#7a9aa6" stroke-width="1"><path d="M5.500 8l-5-3.500v7z" stroke="#3aa896" stroke-dasharray="1 1"/><path d="M12.500 8l-5-3.500v7z"/></g></svg>
<span class="t" style="left:458px;top:128px;color:#6b6b6b">下一单</span>
<svg style="left:503px;top:126px" width="16" height="16" viewBox="0 0 16 16"><rect x="0" y="0" width="14.500" height="15.700" rx="2.500" fill="#5ab4f5"/><g fill="none" stroke="#fff" stroke-width="1.200"><circle cx="9" cy="6" r="2.600"/><path d="M10.800 8l2 2.400"/><path d="M2.500 4.500h3M2.500 7.500h3M2.500 12.300h8"/></g></svg>
<span class="t" style="left:521px;top:128px;">单据查询</span>
<svg style="left:583px;top:126px" width="16" height="16" viewBox="0 0 16 16"><g stroke="#16244c" stroke-width="0.900" fill="#fff8dc"><rect x="0" y="0" width="10.500" height="11.500"/><rect x="2.400" y="2.300" width="10.500" height="11.500"/><rect x="4.800" y="4.600" width="10.800" height="11"/></g><rect x="0.500" y="0.500" width="9.500" height="1.700" fill="#f2b23e"/><rect x="2.900" y="2.800" width="9.500" height="1.600" fill="#f2b23e"/><rect x="5.300" y="5.100" width="9.800" height="2.100" fill="#f2b23e"/><path d="M5.300 9.300h9.800M5.300 11.400h9.800M5.300 13.500h9.800M8.600 7.200v8M11.900 7.200v8" stroke="#aab8d0" stroke-width="0.700" fill="none"/></svg>
<span class="t" style="left:602px;top:128px;">表格设置</span>
<svg style="left:658px;top:126px" width="16" height="16" viewBox="0 0 16 16"><circle cx="8" cy="7.700" r="7" fill="#fde6dc" stroke="#f04a1a" stroke-width="1.700"/><path d="M5.700 6.200a2.400 2.400 0 1 1 3.600 2q-1.300.8-1.300 2.100" fill="none" stroke="#f04a1a" stroke-width="1.500"/><circle cx="8" cy="12" r="0.950" fill="#f04a1a"/></svg>
<span class="t" style="left:677px;top:128px;">帮助</span>
<svg style="left:709px;top:126px" width="16" height="16" viewBox="0 0 16 16"><path d="M2 2.300l12 11.700M14 2.300l-12 11.700" stroke="#111" stroke-width="1.400" fill="none"/></svg>
<span class="t" style="left:728px;top:128px;">关闭</span>
<div style="left:368px;top:125px;width:3px;height:17px;background:rgba(255,255,255,.28)"></div>
<div style="left:368px;top:126px;width:1px;height:15px;background:#7f9fd6;opacity:.55"></div>
<div style="left:369px;top:126px;width:1px;height:15px;background:#fff"></div>
<div style="left:576px;top:125px;width:3px;height:17px;background:rgba(255,255,255,.28)"></div>
<div style="left:576px;top:126px;width:1px;height:15px;background:#7f9fd6;opacity:.55"></div>
<div style="left:577px;top:126px;width:1px;height:15px;background:#fff"></div>
<div style="left:8px;top:155px;width:1579px;height:45px;background:#ffffe1;border-top:1px solid #6a6a6a;border-left:1px solid #6a6a6a;border-right:1px solid #6a6a6a"></div>
<div style="left:9px;top:156px;width:1577px;height:3px;background:#fff"></div>
<div style="left:9px;top:198px;width:1577px;height:2px;background:linear-gradient(180deg,#c9c9b4,#a9a99c)"></div>
<span class="t" style="left:34px;top:162px;height:28px;line-height:28px;font-family:'Liberation Serif','Noto Serif CJK SC',serif;font-weight:600;font-size:20px;color:#d8d890;letter-spacing:2px">销售出库单</span>
<span class="t" style="left:33px;top:161px;height:28px;line-height:28px;font-family:'Liberation Serif','Noto Serif CJK SC',serif;font-weight:600;font-size:20px;color:#008000;letter-spacing:2px">销售出库单</span>
<div style="left:226px;top:164px;width:78px;height:26px;border:2px solid #1a3cf0;border-radius:8px;box-shadow:0 0 2px #4f6cff, inset 0 0 2px #4f6cff"></div>
<span class="t" style="left:226px;top:164px;width:78px;height:26px;line-height:28px;text-align:center;padding-left:4px;font-family:'Liberation Serif','Noto Serif CJK SC',serif;font-weight:600;font-size:19.500px;color:#1a3cf0;letter-spacing:4.500px;text-shadow:0 0 1px #8fa0ff">未审核</span>
<div style="left:347px;top:157px;width:75px;height:15px;background:#008000"></div>
<span class="t" style="left:347px;top:158px;width:75px;text-align:center;color:#fff">出库日期</span>
<div style="left:425px;top:157px;width:74px;height:15px;background:#008000"></div>
<span class="t" style="left:425px;top:158px;width:74px;text-align:center;color:#fff">收款期限</span>
<div style="left:502px;top:157px;width:131px;height:15px;background:#0000ff"></div>
<span class="t" style="left:502px;top:158px;width:131px;text-align:center;color:#fff">自定义单号</span>
<div style="left:636px;top:157px;width:150px;height:15px;background:#0000ff"></div>
<span class="t" style="left:636px;top:158px;width:150px;text-align:center;color:#fff">单据编号</span>
<div style="left:350px;top:177px;width:75px;height:18px;background:#a2a29a"></div>
<div style="left:347px;top:174px;width:76px;height:18px;background:#ffff80;border:1px solid #000"></div>
<span class="t" style="left:348px;top:176px;font-size:12.400px">2026-01-30</span>
<div style="left:427px;top:177px;width:75px;height:18px;background:#a2a29a"></div>
<div style="left:424px;top:174px;width:76px;height:18px;background:#fff;border:1px solid #000"></div>
<span class="t" style="left:425px;top:176px;font-size:12.400px">2026-01-30</span>
<div style="left:505px;top:177px;width:131px;height:18px;background:#a2a29a"></div>
<div style="left:502px;top:174px;width:132px;height:18px;background:#fff;border:1px solid #000"></div>
<div style="left:638px;top:177px;width:151px;height:18px;background:#a2a29a"></div>
<div style="left:635px;top:174px;width:152px;height:18px;background:#fff;border:1px solid #000"></div>
<span class="t" style="left:636px;top:176px;font-size:12.400px">XS202601300001</span>
<div style="left:8px;top:200px;width:1579px;height:61px;background:#fff;border:1px solid #6a6a6a;border-top:none"></div>
<span class="t" style="left:47px;top:212px;">客户<b>:</b></span>
<span class="t" style="left:83px;top:208px;">散客</span>
<div class="ul" style="left:83px;top:224px;width:298px;height:1px;"></div>
<div style="left:387px;top:208px;width:19px;height:19px;background:linear-gradient(180deg,#f3f3f3 0,#ebebeb 49%,#dddddd 51%,#d2d2d2 100%);border:1px solid #80868c;border-radius:3px;box-shadow:inset 0 0 0 1px #fcfcfc"></div>
<div style="left:408px;top:208px;width:19px;height:19px;background:linear-gradient(180deg,#f3f3f3 0,#ebebeb 49%,#dddddd 51%,#d2d2d2 100%);border:1px solid #80868c;border-radius:3px;box-shadow:inset 0 0 0 1px #fcfcfc"></div>
<span class="t" style="left:432px;top:213px;">联系人<b>:</b></span>
<div class="ul" style="left:485px;top:225px;width:94px;height:1px;"></div>
<span class="t" style="left:648px;top:213px;">手机<b>:</b></span>
<div class="ul" style="left:689px;top:225px;width:92px;height:1px;"></div>
<span class="t" style="left:47px;top:238px;">仓库<b>:</b></span>
<span class="t" style="left:83px;top:237px;">主仓库</span>
<div class="ul" style="left:83px;top:253px;width:93px;height:1px;"></div>
<div style="left:179px;top:236px;width:19px;height:19px;background:linear-gradient(180deg,#f3f3f3 0,#ebebeb 49%,#dddddd 51%,#d2d2d2 100%);border:1px solid #80868c;border-radius:3px;box-shadow:inset 0 0 0 1px #fcfcfc"></div>
<span class="t" style="left:234px;top:239px;">经手人<b>:</b></span>
<div class="ul" style="left:289px;top:253px;width:93px;height:1px;"></div>
<div style="left:388px;top:236px;width:19px;height:19px;background:linear-gradient(180deg,#f3f3f3 0,#ebebeb 49%,#dddddd 51%,#d2d2d2 100%);border:1px solid #80868c;border-radius:3px;box-shadow:inset 0 0 0 1px #fcfcfc"></div>
<span class="t" style="left:420px;top:241px;">收款账户<b>:</b></span>
<span class="t" style="left:485px;top:238px;">现金</span>
<div class="ul" style="left:485px;top:254px;width:94px;height:1px;"></div>
<div style="left:580px;top:236px;width:19px;height:19px;background:linear-gradient(180deg,#f3f3f3 0,#ebebeb 49%,#dddddd 51%,#d2d2d2 100%);border:1px solid #80868c;border-radius:3px;box-shadow:inset 0 0 0 1px #fcfcfc"></div>
<span class="t" style="left:624px;top:240px;">交易类型<b>:</b></span>
<span class="t" style="left:689px;top:237px;">现结</span>
<div class="ul" style="left:689px;top:255px;width:92px;height:1px;"></div>
<svg style="left:387px;top:208px" width="19" height="19" viewBox="0 0 19 19"><path d="M2.500 15.500Q2.500 10.500 7 10.500Q11.500 10.500 11.500 15.500z" fill="#2a6ccc"/><path d="M2.500 15.500Q2.500 11.500 4.500 10.900L4.500 15.500z" fill="#2038a0"/><circle cx="8.200" cy="7" r="3.600" fill="#f9b060"/><circle cx="7.400" cy="6.200" r="2" fill="#fcd09a"/><path d="M10.300 9.500h2.400v1.800h1.800v2.400h-1.800v1.800h-2.400v-1.800h-1.800v-2.400h1.800z" fill="#48c030" stroke="#8adc70" stroke-width="0.400"/></svg>
<svg style="left:408px;top:208px" width="19" height="19" viewBox="0 0 19 19"><path d="M7.500 3.700h4v4.300h4.300v4h-4.300v4.300h-4v-4.300h-4.300v-4h4.300z" fill="#4cc62c"/><path d="M8.500 4.700h2v4.300h4.300v2h-4.300v4.300h-2v-4.300h-4.300v-2h4.300z" fill="#7ade58"/></svg>
<svg style="left:179px;top:236px" width="19" height="19" viewBox="0 0 19 19"><path d="M4 9.500l6.500-2.500 4 3v4.500l-4 1.500-6.500-2z" fill="#f4e6bc"/><path d="M10.500 10.500l4-1v4.500l-4 1.500z" fill="#ecd8a4"/><path d="M3.200 9.800l4.500-5.600 3.200-.7 4.300 5.500-1 .6-3.500-4-6.300 4.800z" fill="#c43c0a"/><path d="M3.200 9.800l4.500-5.600 3.200-.7-4 6.300z" fill="#ee6a12"/><path d="M10 3.200h1.200v1.500h-1.200z" fill="#c8502a"/><path d="M10.200 11.500h2.300v4l-2.300.7z" fill="#8a3a10"/><rect x="5.300" y="10.800" width="2" height="1.800" fill="#a8d4f0"/><rect x="10.700" y="8" width="1.500" height="1.500" fill="#a8d4f0"/></svg>
<svg style="left:388px;top:236px" width="19" height="19" viewBox="0 0 19 19"><g fill="none" stroke="#3c9cf8" stroke-width="1.100"><circle cx="9" cy="6.600" r="2.900"/><path d="M4.500 15.300Q4.300 10.300 7.300 9.800M13.500 15.300Q13.700 10.300 10.700 9.800M4.500 15.400h9"/></g></svg>
<span class="t" style="left:580px;top:238px;width:19px;text-align:center;font-weight:bold;font-size:14px">¥</span>
<div style="left:8px;top:273px;width:1579px;height:43px;border:1px solid #646464"></div>
<div style="left:18px;top:272px;width:232px;height:3px;background:#7ba3df"></div>
<span class="t" style="left:18px;top:266px;">可输入产品编号、条码、名称、规格查询</span>
<span class="t" style="left:13px;top:289px;">查询条件<b>:</b></span>
<div style="left:72px;top:285px;width:190px;height:23px;background:#fff;border:1px solid #0078d7"></div>
<span class="t" style="left:266px;top:289px;">数量<b>:</b></span>
<div style="left:303px;top:285px;width:50px;height:23px;background:#fff;border:1px solid #0078d7"></div>
<span class="t" style="left:307px;top:289px;font-family:'Liberation Serif',serif;font-size:12px">1</span>
<div style="left:357px;top:281px;width:112px;height:27px;background:#e1e1e1;border:1px solid #d0d0d0;border-radius:2px"></div>
<svg style="left:362px;top:286px" width="18" height="18" viewBox="0 0 18 18"><g fill="none" stroke="#1e90e0" stroke-width="1.4" stroke-linecap="round" stroke-linejoin="round"><path d="M15 8.5V3.2a1.5 1.5 0 0 0-1.5-1.5h-10A1.5 1.5 0 0 0 2 3.2v10a1.5 1.5 0 0 0 1.500 1.5H8.500"/><path d="M5 5.500h7M5 8.500h5M5 11.500h3"/><path d="M13.500 11v5M11 13.500h5"/></g></svg>
<span class="t" style="left:385px;top:288px;">选择产品明细</span>
<div style="left:8px;top:324px;width:1579px;height:365px;background:#fff;border:1px solid #696969"></div>
<div style="left:9px;top:325px;width:1560px;height:21px;background:#aecaf0"></div>
<div style="left:9px;top:346px;width:1560px;height:4px;background:#86abe4"></div>
<div style="left:34px;top:326px;width:1px;height:20px;background:#8fb0e6"></div>
<span class="t" style="left:35px;top:332px;width:121px;text-align:center">产品编号</span>
<div style="left:156px;top:326px;width:1px;height:20px;background:#8fb0e6"></div>
<span class="t" style="left:157px;top:332px;width:176px;text-align:center">名称</span>
<div style="left:333px;top:326px;width:1px;height:20px;background:#8fb0e6"></div>
<span class="t" style="left:334px;top:332px;width:34px;text-align:center">单位</span>
<div style="left:368px;top:326px;width:1px;height:20px;background:#8fb0e6"></div>
<span class="t" style="left:369px;top:332px;width:78px;text-align:center">规格</span>
<div style="left:447px;top:326px;width:1px;height:20px;background:#8fb0e6"></div>
<span class="t" style="left:448px;top:332px;width:56px;text-align:center">颜色</span>
<div style="left:504px;top:326px;width:1px;height:20px;background:#8fb0e6"></div>
<span class="t" style="left:505px;top:332px;width:56px;text-align:center">品牌</span>
<div style="left:561px;top:326px;width:1px;height:20px;background:#8fb0e6"></div>
<span class="t" style="left:562px;top:332px;width:67px;text-align:center">数量</span>
<div style="left:629px;top:326px;width:1px;height:20px;background:#8fb0e6"></div>
<span class="t" style="left:630px;top:332px;width:67px;text-align:center">单价</span>
<div style="left:697px;top:326px;width:1px;height:20px;background:#8fb0e6"></div>
<span class="t" style="left:698px;top:332px;width:68px;text-align:center">成本价</span>
<div style="left:766px;top:326px;width:1px;height:20px;background:#8fb0e6"></div>
<span class="t" style="left:767px;top:332px;width:59px;text-align:center">利润</span>
<div style="left:826px;top:326px;width:1px;height:20px;background:#8fb0e6"></div>
<span class="t" style="left:827px;top:332px;width:89px;text-align:center">金额</span>
<div style="left:916px;top:326px;width:1px;height:20px;background:#8fb0e6"></div>
<span class="t" style="left:917px;top:332px;width:33px;text-align:center">赠品</span>
<div style="left:950px;top:326px;width:1px;height:20px;background:#8fb0e6"></div>
<span class="t" style="left:951px;top:332px;width:89px;text-align:center">备注</span>
<div style="left:1040px;top:326px;width:1px;height:20px;background:#8fb0e6"></div>
<span class="t" style="left:1041px;top:332px;width:79px;text-align:center">已退货</span>
<div style="left:1120px;top:326px;width:1px;height:20px;background:#8fb0e6"></div>
<span class="t" style="left:1121px;top:332px;width:89px;text-align:center">成本金额</span>
<div style="left:1210px;top:326px;width:1px;height:20px;background:#8fb0e6"></div>
<span class="t" style="left:1211px;top:332px;width:67px;text-align:center">毛利率%</span>
<div style="left:1278px;top:326px;width:1px;height:20px;background:#8fb0e6"></div>
<div style="left:9px;top:350px;width:1560px;height:24px;background:#3b86f0"></div>
<div style="left:1279px;top:349px;width:290px;height:1px;background:#3b86f0"></div>
<span class="t" style="left:9px;top:356px;width:25px;text-align:center;color:#fff">1</span>
<span class="t" style="left:562px;top:356px;width:67px;text-align:right;color:#fff">0</span>
<span class="t" style="left:630px;top:356px;width:67px;text-align:right;color:#fff">0.00</span>
<span class="t" style="left:698px;top:356px;width:68px;text-align:right;color:#fff">0.00</span>
<span class="t" style="left:767px;top:356px;width:59px;text-align:right;color:#fff">0.00</span>
<span class="t" style="left:827px;top:356px;width:89px;text-align:right;color:#fff">0.00</span>
<span class="t" style="left:1041px;top:356px;width:79px;text-align:right;color:#fff">0</span>
<div style="left:35px;top:374px;width:1244px;height:24px;background:#f5faff"></div>
<div style="left:9px;top:397px;width:1270px;height:1px;background:#8fb0e6"></div>
<span class="t" style="left:9px;top:380px;width:25px;text-align:center;color:#0000e0">2</span>
<span class="t" style="left:562px;top:380px;width:67px;text-align:right;color:#000">0</span>
<span class="t" style="left:630px;top:380px;width:67px;text-align:right;color:#000">0.00</span>
<span class="t" style="left:698px;top:380px;width:68px;text-align:right;color:#000">0.00</span>
<span class="t" style="left:767px;top:380px;width:59px;text-align:right;color:#000">0.00</span>
<span class="t" style="left:827px;top:380px;width:89px;text-align:right;color:#000">0.00</span>
<span class="t" style="left:1041px;top:380px;width:79px;text-align:right;color:#000">0</span>
<div style="left:9px;top:421px;width:1270px;height:1px;background:#8fb0e6"></div>
<span class="t" style="left:9px;top:404px;width:25px;text-align:center;color:#0000e0">3</span>
<span class="t" style="left:562px;top:404px;width:67px;text-align:right;color:#000">0</span>
<span class="t" style="left:630px;top:404px;width:67px;text-align:right;color:#000">0.00</span>
<span class="t" style="left:698px;top:404px;width:68px;text-align:right;color:#000">0.00</span>
<span class="t" style="left:767px;top:404px;width:59px;text-align:right;color:#000">0.00</span>
<span class="t" style="left:827px;top:404px;width:89px;text-align:right;color:#000">0.00</span>
<span class="t" style="left:1041px;top:404px;width:79px;text-align:right;color:#000">0</span>
<div style="left:35px;top:422px;width:1244px;height:24px;background:#f5faff"></div>
<div style="left:9px;top:445px;width:1270px;height:1px;background:#8fb0e6"></div>
<span class="t" style="left:9px;top:428px;width:25px;text-align:center;color:#0000e0">4</span>
<span class="t" style="left:562px;top:428px;width:67px;text-align:right;color:#000">0</span>
<span class="t" style="left:630px;top:428px;width:67px;text-align:right;color:#000">0.00</span>
<span class="t" style="left:698px;top:428px;width:68px;text-align:right;color:#000">0.00</span>
<span class="t" style="left:767px;top:428px;width:59px;text-align:right;color:#000">0.00</span>
<span class="t" style="left:827px;top:428px;width:89px;text-align:right;color:#000">0.00</span>
<span class="t" style="left:1041px;top:428px;width:79px;text-align:right;color:#000">0</span>
<div style="left:9px;top:469px;width:1270px;height:1px;background:#8fb0e6"></div>
<span class="t" style="left:9px;top:452px;width:25px;text-align:center;color:#0000e0">5</span>
<span class="t" style="left:562px;top:452px;width:67px;text-align:right;color:#000">0</span>
<span class="t" style="left:630px;top:452px;width:67px;text-align:right;color:#000">0.00</span>
<span class="t" style="left:698px;top:452px;width:68px;text-align:right;color:#000">0.00</span>
<span class="t" style="left:767px;top:452px;width:59px;text-align:right;color:#000">0.00</span>
<span class="t" style="left:827px;top:452px;width:89px;text-align:right;color:#000">0.00</span>
<span class="t" style="left:1041px;top:452px;width:79px;text-align:right;color:#000">0</span>
<div style="left:35px;top:470px;width:1244px;height:24px;background:#f5faff"></div>
<div style="left:9px;top:493px;width:1270px;height:1px;background:#8fb0e6"></div>
<span class="t" style="left:9px;top:476px;width:25px;text-align:center;color:#0000e0">6</span>
<span class="t" style="left:562px;top:476px;width:67px;text-align:right;color:#000">0</span>
<span class="t" style="left:630px;top:476px;width:67px;text-align:right;color:#000">0.00</span>
<span class="t" style="left:698px;top:476px;width:68px;text-align:right;color:#000">0.00</span>
<span class="t" style="left:767px;top:476px;width:59px;text-align:right;color:#000">0.00</span>
<span class="t" style="left:827px;top:476px;width:89px;text-align:right;color:#000">0.00</span>
<span class="t" style="left:1041px;top:476px;width:79px;text-align:right;color:#000">0</span>
<div style="left:9px;top:517px;width:1270px;height:1px;background:#8fb0e6"></div>
<span class="t" style="left:9px;top:500px;width:25px;text-align:center;color:#0000e0">7</span>
<span class="t" style="left:562px;top:500px;width:67px;text-align:right;color:#000">0</span>
<span class="t" style="left:630px;top:500px;width:67px;text-align:right;color:#000">0.00</span>
<span class="t" style="left:698px;top:500px;width:68px;text-align:right;color:#000">0.00</span>
<span class="t" style="left:767px;top:500px;width:59px;text-align:right;color:#000">0.00</span>
<span class="t" style="left:827px;top:500px;width:89px;text-align:right;color:#000">0.00</span>
<span class="t" style="left:1041px;top:500px;width:79px;text-align:right;color:#000">0</span>
<div style="left:35px;top:518px;width:1244px;height:24px;background:#f5faff"></div>
<div style="left:9px;top:541px;width:1270px;height:1px;background:#8fb0e6"></div>
<span class="t" style="left:9px;top:524px;width:25px;text-align:center;color:#0000e0">8</span>
<span class="t" style="left:562px;top:524px;width:67px;text-align:right;color:#000">0</span>
<span class="t" style="left:630px;top:524px;width:67px;text-align:right;color:#000">0.00</span>
<span class="t" style="left:698px;top:524px;width:68px;text-align:right;color:#000">0.00</span>
<span class="t" style="left:767px;top:524px;width:59px;text-align:right;color:#000">0.00</span>
<span class="t" style="left:827px;top:524px;width:89px;text-align:right;color:#000">0.00</span>
<span class="t" style="left:1041px;top:524px;width:79px;text-align:right;color:#000">0</span>
<div style="left:9px;top:565px;width:1270px;height:1px;background:#8fb0e6"></div>
<span class="t" style="left:9px;top:548px;width:25px;text-align:center;color:#0000e0">9</span>
<span class="t" style="left:562px;top:548px;width:67px;text-align:right;color:#000">0</span>
<span class="t" style="left:630px;top:548px;width:67px;text-align:right;color:#000">0.00</span>
<span class="t" style="left:698px;top:548px;width:68px;text-align:right;color:#000">0.00</span>
<span class="t" style="left:767px;top:548px;width:59px;text-align:right;color:#000">0.00</span>
<span class="t" style="left:827px;top:548px;width:89px;text-align:right;color:#000">0.00</span>
<span class="t" style="left:1041px;top:548px;width:79px;text-align:right;color:#000">0</span>
<div style="left:35px;top:566px;width:1244px;height:24px;background:#f5faff"></div>
<div style="left:9px;top:589px;width:1270px;height:1px;background:#8fb0e6"></div>
<span class="t" style="left:9px;top:572px;width:25px;text-align:center;color:#0000e0">10</span>
<span class="t" style="left:562px;top:572px;width:67px;text-align:right;color:#000">0</span>
<span class="t" style="left:630px;top:572px;width:67px;text-align:right;color:#000">0.00</span>
<span class="t" style="left:698px;top:572px;width:68px;text-align:right;color:#000">0.00</span>
<span class="t" style="left:767px;top:572px;width:59px;text-align:right;color:#000">0.00</span>
<span class="t" style="left:827px;top:572px;width:89px;text-align:right;color:#000">0.00</span>
<span class="t" style="left:1041px;top:572px;width:79px;text-align:right;color:#000">0</span>
<div style="left:9px;top:613px;width:1270px;height:1px;background:#8fb0e6"></div>
<span class="t" style="left:9px;top:596px;width:25px;text-align:center;color:#0000e0">11</span>
<span class="t" style="left:562px;top:596px;width:67px;text-align:right;color:#000">0</span>
<span class="t" style="left:630px;top:596px;width:67px;text-align:right;color:#000">0.00</span>
<span class="t" style="left:698px;top:596px;width:68px;text-align:right;color:#000">0.00</span>
<span class="t" style="left:767px;top:596px;width:59px;text-align:right;color:#000">0.00</span>
<span class="t" style="left:827px;top:596px;width:89px;text-align:right;color:#000">0.00</span>
<span class="t" style="left:1041px;top:596px;width:79px;text-align:right;color:#000">0</span>
<div style="left:35px;top:614px;width:1244px;height:24px;background:#f5faff"></div>
<div style="left:9px;top:637px;width:1270px;height:1px;background:#8fb0e6"></div>
<span class="t" style="left:9px;top:620px;width:25px;text-align:center;color:#0000e0">12</span>
<span class="t" style="left:562px;top:620px;width:67px;text-align:right;color:#000">0</span>
<span class="t" style="left:630px;top:620px;width:67px;text-align:right;color:#000">0.00</span>
<span class="t" style="left:698px;top:620px;width:68px;text-align:right;color:#000">0.00</span>
<span class="t" style="left:767px;top:620px;width:59px;text-align:right;color:#000">0.00</span>
<span class="t" style="left:827px;top:620px;width:89px;text-align:right;color:#000">0.00</span>
<span class="t" style="left:1041px;top:620px;width:79px;text-align:right;color:#000">0</span>
<div style="left:34px;top:350px;width:1px;height:288px;background:#8fb0e6"></div>
<div style="left:156px;top:350px;width:1px;height:288px;background:#8fb0e6"></div>
<div style="left:333px;top:350px;width:1px;height:288px;background:#8fb0e6"></div>
<div style="left:368px;top:350px;width:1px;height:288px;background:#8fb0e6"></div>
<div style="left:447px;top:350px;width:1px;height:288px;background:#8fb0e6"></div>
<div style="left:504px;top:350px;width:1px;height:288px;background:#8fb0e6"></div>
<div style="left:561px;top:350px;width:1px;height:288px;background:#8fb0e6"></div>
<div style="left:629px;top:350px;width:1px;height:288px;background:#8fb0e6"></div>
<div style="left:697px;top:350px;width:1px;height:288px;background:#8fb0e6"></div>
<div style="left:766px;top:350px;width:1px;height:288px;background:#8fb0e6"></div>
<div style="left:826px;top:350px;width:1px;height:288px;background:#8fb0e6"></div>
<div style="left:916px;top:350px;width:1px;height:288px;background:#8fb0e6"></div>
<div style="left:950px;top:350px;width:1px;height:288px;background:#8fb0e6"></div>
<div style="left:1040px;top:350px;width:1px;height:288px;background:#8fb0e6"></div>
<div style="left:1120px;top:350px;width:1px;height:288px;background:#8fb0e6"></div>
<div style="left:1210px;top:350px;width:1px;height:288px;background:#8fb0e6"></div>
<div style="left:1278px;top:350px;width:1px;height:288px;background:#8fb0e6"></div>
<div style="left:9px;top:644px;width:1560px;height:27px;background:#adc8ef"></div>
<span class="t" style="left:76px;top:652px;color:#800000;font-weight:bold;letter-spacing:0.5px">合计<b>:</b></span>
<span class="t" style="left:562px;top:652px;width:67px;text-align:right;color:#800000;font-weight:bold">0</span>
<span class="t" style="left:767px;top:652px;width:59px;text-align:right;color:#800000;font-weight:bold">0.00</span>
<span class="t" style="left:827px;top:652px;width:89px;text-align:right;color:#800000;font-weight:bold">0.00</span>
<span class="t" style="left:1121px;top:652px;width:89px;text-align:right;color:#800000;font-weight:bold">0.00</span>
<div style="left:1569px;top:325px;width:17px;height:346px;background-color:#fff;background-image:linear-gradient(45deg,#e9e9e9 25%,transparent 25%,transparent 75%,#e9e9e9 75%),linear-gradient(45deg,#e9e9e9 25%,transparent 25%,transparent 75%,#e9e9e9 75%);background-size:2px 2px;background-position:0 0,1px 1px"></div>
<div style="left:1569px;top:325px;width:17px;height:17px;background:#f0f0f0;border-right:1px solid #696969;border-bottom:1px solid #696969;border-top:1px solid #fff;border-left:1px solid #fff;box-shadow:inset -1px -1px 0 #a0a0a0"></div>
<svg style="left:1573px;top:330px" width="8" height="5" viewBox="0 0 8 5"><path d="M4 0.500l3.500 4h-7z" fill="#000"/></svg>
<div style="left:1569px;top:342px;width:17px;height:125px;background:#f0f0f0;border-right:1px solid #696969;border-bottom:1px solid #696969;border-top:1px solid #fff;border-left:1px solid #fff;box-shadow:inset -1px -1px 0 #a0a0a0"></div>
<div style="left:1569px;top:654px;width:17px;height:17px;background:#f0f0f0;border-right:1px solid #696969;border-bottom:1px solid #696969;border-top:1px solid #fff;border-left:1px solid #fff;box-shadow:inset -1px -1px 0 #a0a0a0"></div>
<svg style="left:1573px;top:660px" width="8" height="5" viewBox="0 0 8 5"><path d="M0.5 0.5h7l-3.5 4z" fill="#000"/></svg>
<div style="left:9px;top:671px;width:1560px;height:17px;background-color:#fff;background-image:linear-gradient(45deg,#e9e9e9 25%,transparent 25%,transparent 75%,#e9e9e9 75%),linear-gradient(45deg,#e9e9e9 25%,transparent 25%,transparent 75%,#e9e9e9 75%);background-size:2px 2px;background-position:0 0,1px 1px"></div>
<div style="left:9px;top:671px;width:10px;height:17px;background:#646464"></div>
<div style="left:19px;top:671px;width:17px;height:17px;background:#f0f0f0;border-right:1px solid #696969;border-bottom:1px solid #696969;border-top:1px solid #fff;border-left:1px solid #fff;box-shadow:inset -1px -1px 0 #a0a0a0"></div>
<svg style="left:24px;top:675px" width="5" height="8" viewBox="0 0 5 8"><path d="M4.500 0.500v7l-4-3.500z" fill="#000"/></svg>
<div style="left:36px;top:671px;width:1428px;height:17px;background:#f0f0f0;border-right:1px solid #696969;border-bottom:1px solid #696969;border-top:1px solid #fff;border-left:1px solid #fff;box-shadow:inset -1px -1px 0 #a0a0a0"></div>
<div style="left:1553px;top:671px;width:16px;height:17px;background:#f0f0f0;border-right:1px solid #696969;border-bottom:1px solid #696969;border-top:1px solid #fff;border-left:1px solid #fff;box-shadow:inset -1px -1px 0 #a0a0a0"></div>
<svg style="left:1558px;top:675px" width="5" height="8" viewBox="0 0 5 8"><path d="M0.5 0.5v7l4-3.500z" fill="#000"/></svg>
<div style="left:1569px;top:671px;width:17px;height:17px;background:#c6c6c6"></div>
<div style="left:8px;top:696px;width:1579px;height:110px;background:#fff;border:1px solid #6a6a6a"></div>
<span class="t" style="left:17px;top:710px;">应收<b>:</b></span>
<span class="t" style="left:54px;top:709px;">0.00</span>
<div class="ul" style="left:54px;top:723px;width:118px;height:1px;"></div>
<span class="t" style="left:195px;top:710px;">预收<b>:</b></span>
<span class="t" style="left:231px;top:709px;">0.00</span>
<div class="ul" style="left:231px;top:723px;width:123px;height:1px;"></div>
<span class="t" style="left:390px;top:710px;">运费<b>:</b></span>
<span class="t" style="left:425px;top:709px;">0.00</span>
<div class="ul" style="left:425px;top:723px;width:70px;height:1px;"></div>
<span class="t" style="left:527px;top:710px;">杂费<b>:</b></span>
<span class="t" style="left:561px;top:709px;">0.00</span>
<div class="ul" style="left:561px;top:723px;width:113px;height:1px;"></div>
<span class="t" style="left:687px;top:710px;">制单<b>:</b></span>
<span class="t" style="left:718px;top:709px;">管理员</span>
<div class="ul" style="left:718px;top:723px;width:68px;height:1px;"></div>
<span class="t" style="left:17px;top:740px;">优惠<b>:</b></span>
<span class="t" style="left:54px;top:740px;">0.00</span>
<div class="ul" style="left:54px;top:754px;width:118px;height:1px;"></div>
<span class="t" style="left:194px;top:740px;color:#f00">收现<b>:</b></span>
<span class="t" style="left:231px;top:740px;color:#f00">0.00</span>
<div class="ul" style="left:231px;top:754px;width:123px;height:1px;"></div>
<span class="t" style="left:390px;top:740px;">快递<b>:</b></span>
<div class="ul" style="left:425px;top:754px;width:70px;height:1px;"></div>
<div style="left:500px;top:736px;width:19px;height:19px;background:linear-gradient(180deg,#f3f3f3 0,#ebebeb 49%,#dddddd 51%,#d2d2d2 100%);border:1px solid #80868c;border-radius:3px;box-shadow:inset 0 0 0 1px #fcfcfc"></div>
<svg style="left:500px;top:736px" width="19" height="19" viewBox="0 0 19 19"><defs><linearGradient id="cdg" x1="0" y1="1" x2="1" y2="0"><stop offset="0" stop-color="#6cc8ff"/><stop offset="0.5" stop-color="#1e96f6"/><stop offset="1" stop-color="#3aa6f8"/></linearGradient></defs><rect x="4" y="8" width="10" height="6.800" rx="1.200" fill="url(#cdg)"/><circle cx="6.300" cy="10.300" r="1" fill="#f8e25a"/><rect x="11.300" y="12.300" width="1.800" height="1.800" fill="#8ab0f0"/></svg>
<span class="t" style="left:527px;top:740px;">单号<b>:</b></span>
<div class="ul" style="left:561px;top:754px;width:113px;height:1px;"></div>
<span class="t" style="left:687px;top:740px;">审核<b>:</b></span>
<div class="ul" style="left:719px;top:754px;width:68px;height:1px;"></div>
<span class="t" style="left:17px;top:767px;">备注<b>:</b></span>
<div class="ul" style="left:53px;top:780px;width:732px;height:1px;"></div>
<span class="t" style="left:17px;top:788px;">送货<b>:</b></span>
</body></html>
